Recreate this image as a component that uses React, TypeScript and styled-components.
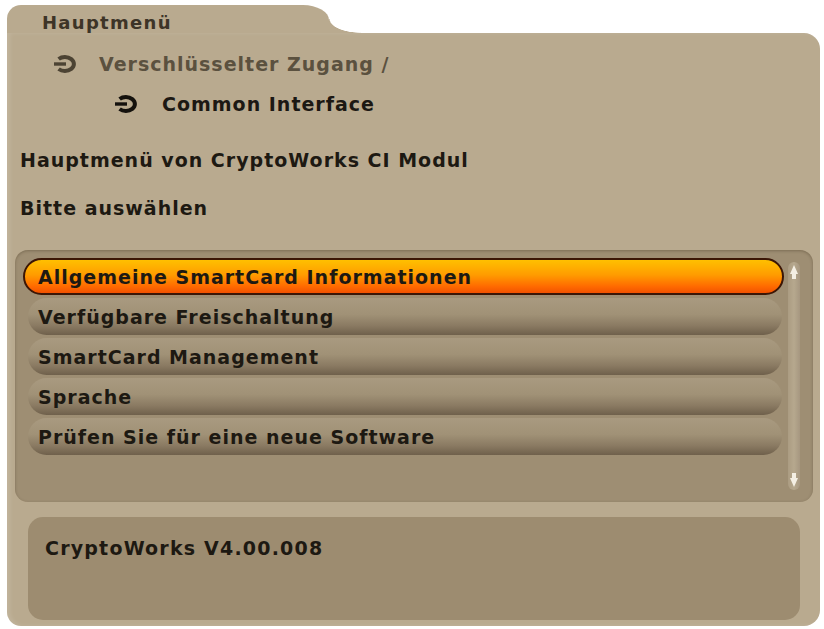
import React from "react";
import styled, { createGlobalStyle } from "styled-components";

const Global = createGlobalStyle`
  html, body {
    margin: 0;
    padding: 0;
    background: #ffffff;
  }
  body {
    font-family: "DejaVu Sans", "Liberation Sans", sans-serif;
  }
`;

const PANEL = "#b9aa8f";

const Screen = styled.div`
  width: 824px;
  height: 629px;
  padding: 5px 4px 3px 7px;
  box-sizing: border-box;
  display: flex;
  flex-direction: column;
`;

const Tab = styled.div`
  position: relative;
  width: 322px;
  height: 28px;
  background: ${PANEL};
  border-radius: 14px 26px 0 0 / 14px 15px 0 0;
  padding-left: 35px;
  box-sizing: border-box;
  font-size: 18px;
  letter-spacing: 1.3px;
  font-weight: bold;
  color: #3d3427;
  line-height: 36px;
  &::after {
    content: "";
    position: absolute;
    left: 100%;
    bottom: 0;
    width: 32px;
    height: 14px;
    background: radial-gradient(32px 14px at 100% 0, transparent 96%, ${PANEL} 100%);
  }
`;

const Body = styled.div`
  flex: 1;
  background: ${PANEL};
  border-radius: 0 16px 16px 14px;
  padding: 11px 0 6px 0;
  display: flex;
  flex-direction: column;
  box-shadow: inset 3px 0 4px rgba(255, 255, 255, 0.12);
`;

const Crumb = styled.div<{ $indent: number; $dark?: boolean }>`
  height: 40px;
  display: flex;
  align-items: center;
  padding-left: ${(p) => p.$indent}px;
  font-size: 19px;
  letter-spacing: 1px;
  font-weight: bold;
  color: ${(p) => (p.$dark ? "#1c1813" : "#5b513f")};
  svg {
    margin-right: ${(p) => (p.$dark ? 24 : 22)}px;
  }
`;

const Line = styled.div<{ $top: number }>`
  height: 40px;
  line-height: 40px;
  margin-top: ${(p) => p.$top}px;
  padding-left: 13px;
  font-size: 19px;
  letter-spacing: 1px;
  font-weight: bold;
  color: #1d1912;
`;

const ListPanel = styled.div`
  margin: 22px 7px 0 8px;
  height: 252px;
  box-sizing: border-box;
  background: #9e8e73;
  border-radius: 13px;
  padding: 8px 13px 8px 8px;
  display: flex;
  box-shadow: inset 0 1px 3px rgba(60, 45, 25, 0.35);
`;

const Rows = styled.div`
  flex: 1;
  display: flex;
  flex-direction: column;
  gap: 3px;
`;

const Row = styled.div<{ $active?: boolean }>`
  height: 37px;
  box-sizing: border-box;
  border-radius: 19px;
  display: flex;
  align-items: center;
  font-size: 19px;
  letter-spacing: 1px;
  font-weight: bold;
  color: #1d1912;
  padding-left: ${(p) => (p.$active ? 13 : 10)}px;
  margin: ${(p) => (p.$active ? "0" : "0 2px 0 5px")};
  border: ${(p) => (p.$active ? "2px solid #3b1606" : "none")};
  background: ${(p) =>
    p.$active
      ? "linear-gradient(to bottom, #ffc000 0%, #ff9c00 45%, #ff6a00 80%, #f25200 100%)"
      : "linear-gradient(to bottom, #a99a80 0%, #a09176 45%, #8a7a62 75%, #6f604b 100%)"};
`;

const Scroll = styled.div`
  width: 12px;
  margin: 4px 0 4px 4px;
  border-radius: 6px;
  background: linear-gradient(to right, #ab9c82, #b6a88e, #a69780);
  display: flex;
  flex-direction: column;
  justify-content: space-between;
  align-items: center;
  padding: 3px 0;
`;

const InfoPanel = styled.div`
  margin: 15px 20px 0 21px;
  height: 103px;
  box-sizing: border-box;
  background: #9d8c70;
  border-radius: 15px;
  padding: 20px 0 0 17px;
  font-size: 19px;
  letter-spacing: 1.2px;
  font-weight: bold;
  color: #1d1912;
`;

const Hook = ({ color }: { color: string }) => (
  <svg width="26" height="20" viewBox="0 0 26 20">
    <path d="M7.6 5 A9 7 0 1 1 7.6 15" fill="none" stroke={color} strokeWidth="4" />
    <path d="M3 10 H15" stroke={color} strokeWidth="3.4" />
  </svg>
);

const Arrow = ({ down }: { down?: boolean }) => (
  <svg width="8" height="14" viewBox="0 0 8 14">
    <path
      d={down ? "M2 0 H6 V5 L8 5 L4 14 L0 5 L2 5 Z" : "M4 0 L8 9 L6 9 V14 H2 V9 L0 9 Z"}
      fill="#f4efe4"
    />
  </svg>
);

const items = [
  "Allgemeine SmartCard Informationen",
  "Verfügbare Freischaltung",
  "SmartCard Management",
  "Sprache",
  "Prüfen Sie für eine neue Software",
];

export default function App() {
  return (
    <>
      <Global />
      <Screen>
        <Tab>Hauptmenü</Tab>
        <Body>
          <Crumb $indent={44}>
            <Hook color="#4c4333" />
            Verschlüsselter Zugang /
          </Crumb>
          <Crumb $indent={105} $dark>
            <Hook color="#14110d" />
            Common Interface
          </Crumb>
          <Line $top={16}>Hauptmenü von CryptoWorks CI Modul</Line>
          <Line $top={8}>Bitte auswählen</Line>
          <ListPanel>
            <Rows>
              {items.map((t, i) => (
                <Row key={t} $active={i === 0}>
                  {t}
                </Row>
              ))}
            </Rows>
            <Scroll>
              <Arrow />
              <Arrow down />
            </Scroll>
          </ListPanel>
          <InfoPanel>CryptoWorks V4.00.008</InfoPanel>
        </Body>
      </Screen>
    </>
  );
}
